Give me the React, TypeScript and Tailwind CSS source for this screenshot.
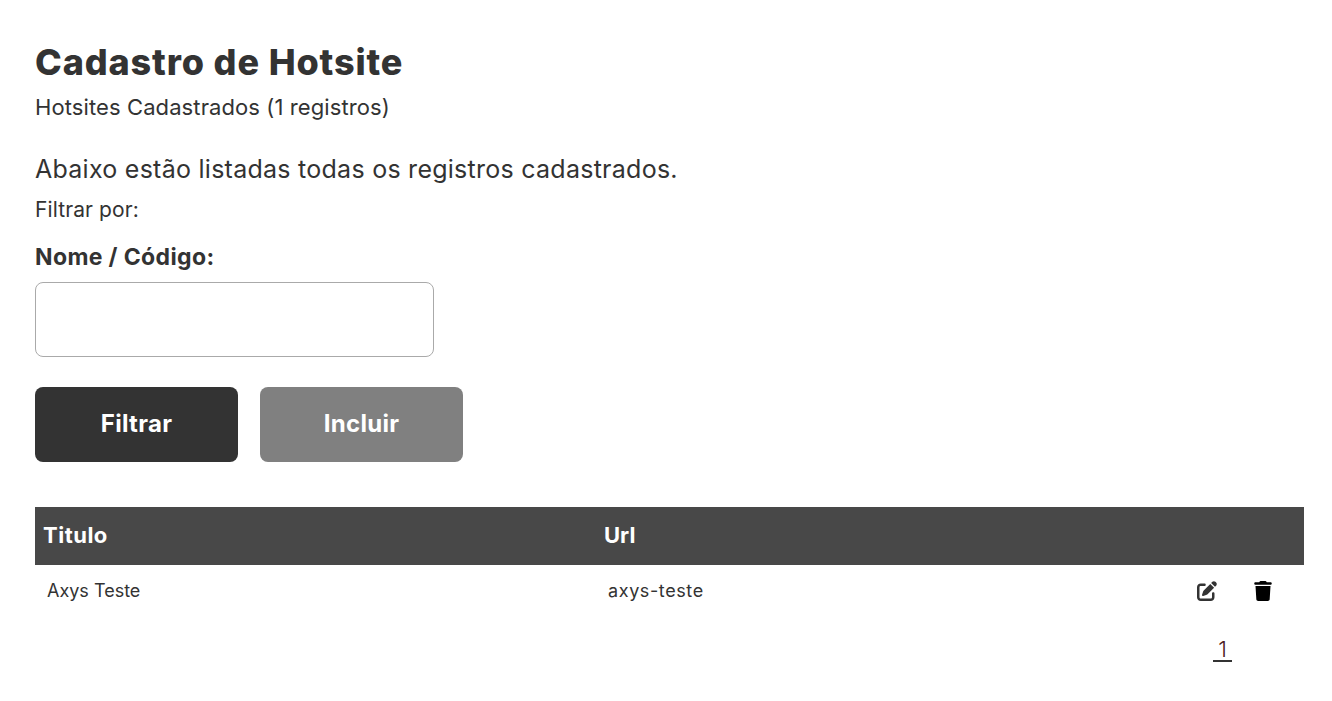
import { FaPenToSquare, FaTrash } from 'react-icons/fa6'

export default function App() {
  return (
    <div className="min-h-[701px] bg-white pl-[35px] pr-[28px] pt-[39px] font-['Inter',sans-serif] text-[#333333]">
      <h1 className="text-[36px] font-extrabold leading-[46px] tracking-[0.87px]">Cadastro de Hotsite</h1>
      <p className="mt-[7px] text-[22px] font-normal leading-[30px] tracking-[0.1px]">
        Hotsites Cadastrados (1 registros)
      </p>

      <p className="mt-[31px] text-[25px] font-normal leading-[32px] tracking-[0.26px]">
        Abaixo estão listadas todas os registros cadastrados.
      </p>
      <p className="mt-[11px] text-[21px] font-normal leading-[28px] tracking-[0.1px]">Filtrar por:</p>

      <label className="mt-[18px] block text-[23px] font-bold leading-[30px] tracking-[0.37px]">
        Nome / Código:
      </label>
      <input
        type="text"
        className="mt-[10px] block h-[75px] w-[399px] rounded-lg border border-[#aaaaaa] bg-white px-3"
      />

      <div className="mt-[30px] flex gap-[22px]">
        <button className="h-[75px] w-[203px] rounded-lg bg-[#333333] pb-[2px] text-[24px] font-bold tracking-[0.3px] text-white">
          Filtrar
        </button>
        <button className="h-[75px] w-[203px] rounded-lg bg-[#808080] pb-[2px] text-[24px] font-bold tracking-[0.3px] text-white">
          Incluir
        </button>
      </div>

      <table className="mt-[45px] w-[1269px] table-fixed border-collapse">
        <thead>
          <tr className="h-[58px] bg-[#484848] text-left text-[22px] font-extrabold text-white">
            <th className="w-[561px] pb-[2px] pl-2 tracking-[0.5px]">Titulo</th>
            <th className="pb-[2px] pl-2">Url</th>
            <th className="w-[140px]"></th>
          </tr>
        </thead>
        <tbody>
          <tr className="h-[52px] text-[18px] font-normal">
            <td className="pb-[2px] pl-3">Axys Teste</td>
            <td className="pb-[2px] pl-3 tracking-[0.6px]">axys-teste</td>
            <td>
              <div className="flex items-center gap-[36px] pl-[33px]">
                <FaPenToSquare className="h-[20px] w-[20px] text-[#333333]" />
                <FaTrash className="h-[20px] w-[20px] text-black" />
              </div>
            </td>
          </tr>
        </tbody>
      </table>

      <div className="mt-[22px] flex w-[1269px] justify-end pr-[72px]">
        <a className="w-[19px] border-b-2 border-[#333333] text-center text-[22px] font-light leading-[21px] text-[#4a2020]">
          1
        </a>
      </div>
    </div>
  )
}
